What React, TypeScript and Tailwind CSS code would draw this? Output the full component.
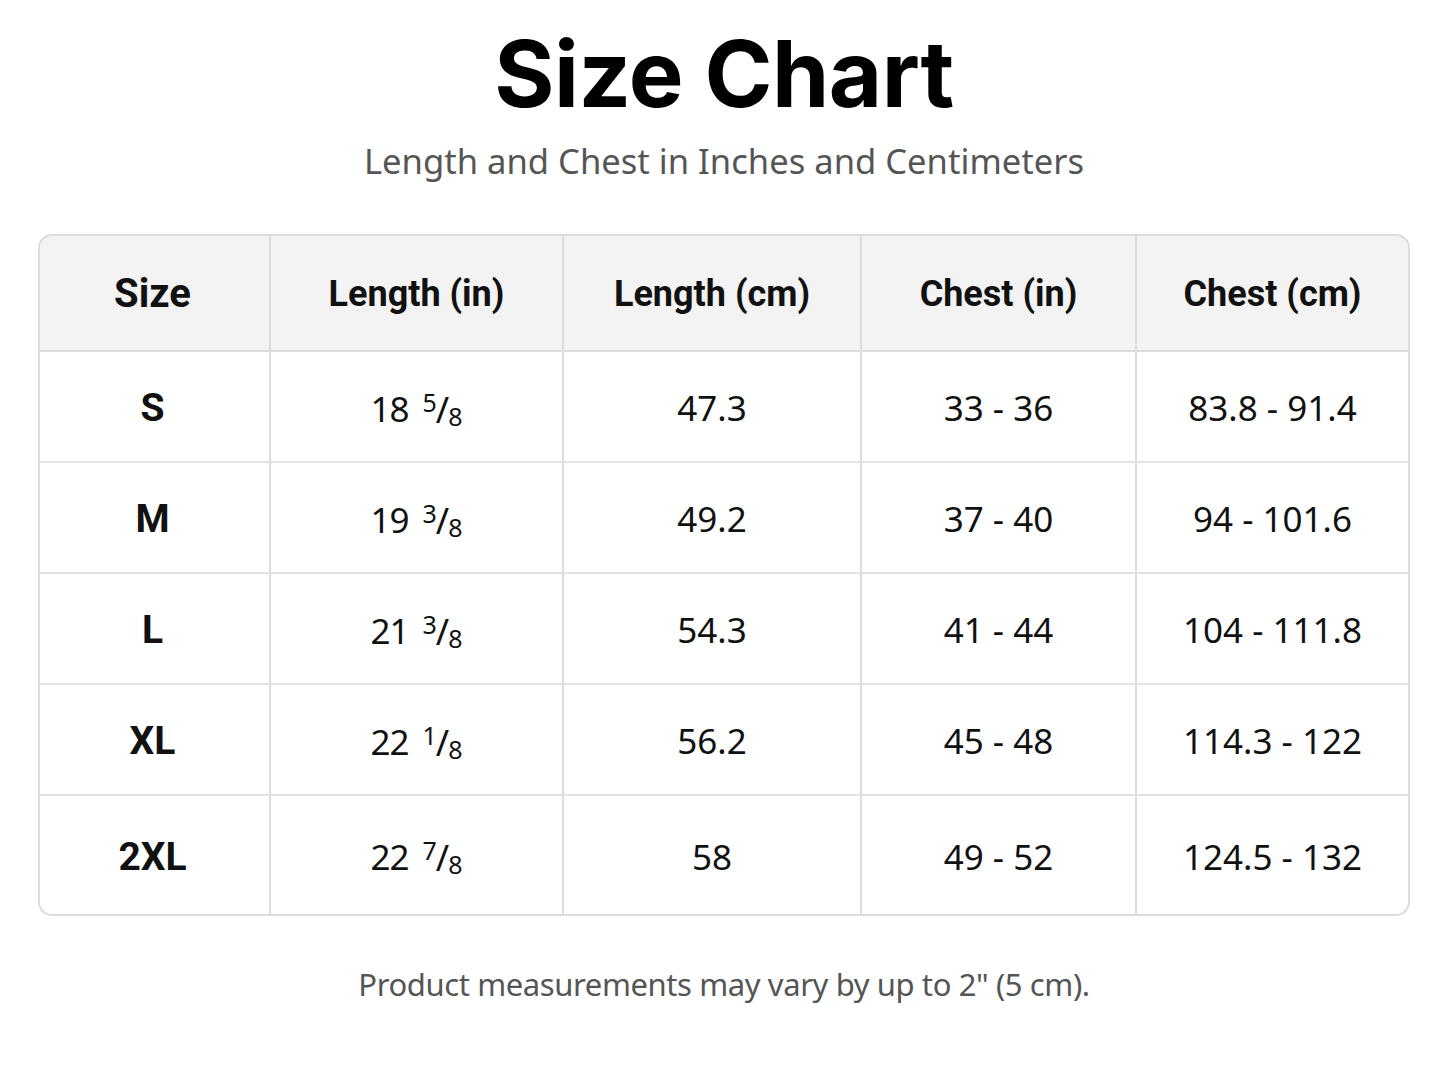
import React from "react";

type Frac = { whole: string; num: string; den: string };

const rows: { size: string; len: Frac; lcm: string; chin: string; chcm: string }[] = [
  { size: "S", len: { whole: "18", num: "5", den: "8" }, lcm: "47.3", chin: "33 - 36", chcm: "83.8 - 91.4" },
  { size: "M", len: { whole: "19", num: "3", den: "8" }, lcm: "49.2", chin: "37 - 40", chcm: "94 - 101.6" },
  { size: "L", len: { whole: "21", num: "3", den: "8" }, lcm: "54.3", chin: "41 - 44", chcm: "104 - 111.8" },
  { size: "XL", len: { whole: "22", num: "1", den: "8" }, lcm: "56.2", chin: "45 - 48", chcm: "114.3 - 122" },
  { size: "2XL", len: { whole: "22", num: "7", den: "8" }, lcm: "58", chin: "49 - 52", chcm: "124.5 - 132" },
];

const cols = "grid grid-cols-[229px_293px_298px_275px_1fr]";

function Fraction({ f }: { f: Frac }) {
  return (
    <span className="inline-flex items-baseline">
      <span className="tracking-[-1px]">{f.whole}</span>
      <span className="ml-[14px] relative top-[-10px] text-[25px]">{f.num}</span>
      <span className="text-[36px] mx-[-1px] relative top-[1px]">/</span>
      <span className="relative top-[4px] text-[25px]">{f.den}</span>
    </span>
  );
}

export default function App() {
  return (
    <div className="w-[1448px] h-[1086px] bg-white flex flex-col items-center font-['Inter',sans-serif] text-[#111]">
      <h1 className="mt-[22px] text-[92px] leading-[104px] font-bold tracking-[-0.5px] text-black">Size Chart</h1>
      <p className="mt-[12px] text-[34.6px] leading-[46px] text-[#555] font-['Noto_Sans',sans-serif]">
        Length and Chest in Inches and Centimeters
      </p>
      <div className="mt-[50px] w-[1372px] border-2 border-[#dcdcdc] rounded-[14px] overflow-hidden">
        <div className={`${cols} bg-[#f3f3f3] h-[116px] border-b-2 border-[#dcdcdc]`}>
          {["Size", "Length (in)", "Length (cm)", "Chest (in)", "Chest (cm)"].map((h, i) => (
            <div
              key={h}
              className={`flex items-center justify-center pt-[2px] font-bold font-['Roboto',sans-serif] ${
                i === 0 ? "text-[40px] pr-[4px]" : "text-[36px] border-l-2 border-[#dcdcdc]"
              }`}
            >
              {h}
            </div>
          ))}
        </div>
        {rows.map((r, ri) => (
          <div
            key={r.size}
            className={`${cols} ${ri === 4 ? "h-[118px]" : "h-[111px]"} ${ri < 4 ? "border-b-2 border-[#e2e2e2]" : ""} font-['Noto_Sans',sans-serif] text-[35px]`}
          >
            <div className="flex items-center justify-center pt-[4px] pr-[4px] font-bold font-['Roboto',sans-serif] text-[39px]">{r.size}</div>
            <div className="flex items-center justify-center pt-[4px] border-l-2 border-[#dcdcdc]">
              <Fraction f={r.len} />
            </div>
            <div className="flex items-center justify-center pt-[4px] border-l-2 border-[#dcdcdc]">{r.lcm}</div>
            <div className="flex items-center justify-center pt-[4px] border-l-2 border-[#dcdcdc]">{r.chin}</div>
            <div className="flex items-center justify-center pt-[4px] border-l-2 border-[#dcdcdc]">{r.chcm}</div>
          </div>
        ))}
      </div>
      <p className="mt-[46px] text-[31px] leading-[44px] text-[#555] font-['Noto_Sans',sans-serif] tracking-[-0.4px]">
        Product measurements may vary by up to 2" (5 cm).
      </p>
    </div>
  );
}
